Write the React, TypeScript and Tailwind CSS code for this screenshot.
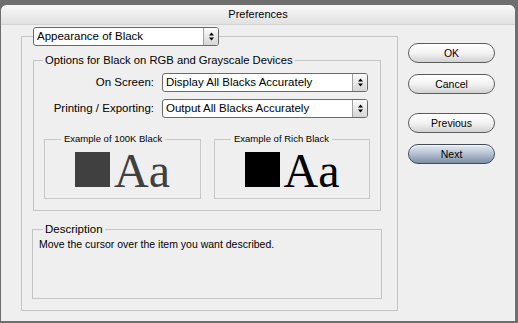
import React from "react";

function Select({ className, text, textSize }: { className: string; text: string; textSize: string }) {
  return (
    <div className={`flex h-[19px] bg-white border border-[#6a6a6a] rounded-[3px] overflow-hidden ${className}`}>
      <div className={`flex-1 flex items-center pl-[3px] whitespace-nowrap ${textSize} leading-none`}>{text}</div>
      <div className="w-[15px] border-l border-[#a0a0a0] bg-gradient-to-b from-[#fbfbfb] to-[#d6d6d6] flex items-center justify-center">
        <svg width="7" height="9" viewBox="0 0 7 9">
          <path d="M3.5 0.5L6 3.5H1Z M3.5 8.5L6 5.5H1Z" fill="#000" />
        </svg>
      </div>
    </div>
  );
}

function Btn({ label, primary, className }: { label: string; primary?: boolean; className?: string }) {
  return (
    <div
      className={`w-[87px] h-[20px] rounded-full border flex items-center justify-center text-[10.5px] leading-none ${
        primary
          ? "border-[#3f4a5a] bg-gradient-to-b from-[#e6ebf2] via-[#b4c0d0] to-[#7f8ea6] shadow-[inset_0_1px_0_#f4f7fb]"
          : "border-[#5c5c5c] bg-gradient-to-b from-[#ffffff] via-[#f3f3f3] to-[#d2d2d2] shadow-[inset_0_1px_0_#ffffff]"
      } ${className ?? ""}`}
    >
      {label}
    </div>
  );
}

function Example({ title, color, w }: { title: string; color: string; w: string }) {
  return (
    <fieldset className={`${w} h-[66px] border border-[#c8c8c8] m-0 p-0 min-w-0`}>
      <legend className="ml-[16px] px-[3px] text-[9.5px] leading-[12px]">{title}</legend>
      <div className="flex items-baseline justify-center pt-[2px]">
        <div className={`w-[35px] h-[35px] ${color === "gray" ? "bg-[#404040]" : "bg-black"}`} />
        <span
          className={`ml-[4px] font-['Liberation_Serif',serif] text-[48px] leading-none ${
            color === "gray" ? "text-[#404040]" : "text-black"
          }`}
        >
          Aa
        </span>
      </div>
    </fieldset>
  );
}

export default function App() {
  return (
    <div className="w-[518px] h-[323px] bg-[#6e6e6e] pt-[5px] pl-[1px] pr-[3px] pb-[2px] font-['Liberation_Sans',Arial,sans-serif] text-black">
      <div className="h-full flex flex-col rounded-t-[6px] bg-[#efefef] overflow-hidden">
        <div className="h-[20px] shrink-0 flex items-center justify-center bg-gradient-to-b from-[#f8f8f8] to-[#e1e1e1] border-b border-[#d2d2d2] text-[11px]">
          Preferences
        </div>
        <div className="flex flex-1 pl-[20px] pt-[2px]">
          <fieldset className="w-[377px] self-start border border-[#c4c4c4] pl-[11px] pr-[16px] pb-[11px] m-0 min-w-0">
            <legend className="p-0">
              <Select className="w-[186px]" text="Appearance of Black" textSize="text-[11.5px]" />
            </legend>
            <fieldset className="mt-[7px] w-[348px] border border-[#c4c4c4] pl-[9px] pb-[11px] m-0 min-w-0">
              <legend className="px-[2px] text-[11.25px] leading-[14px] whitespace-nowrap">
                Options for Black on RGB and Grayscale Devices
              </legend>
              <div className="mt-[6px] flex items-center">
                <span className="w-[111px] text-right text-[11.5px] leading-none">On Screen:</span>
                <Select className="ml-[8px] w-[206px]" text="Display All Blacks Accurately" textSize="text-[11.5px]" />
              </div>
              <div className="mt-[7px] flex items-center">
                <span className="w-[111px] text-right text-[11.5px] leading-none whitespace-nowrap">Printing / Exporting:</span>
                <Select className="ml-[8px] w-[206px]" text="Output All Blacks Accurately" textSize="text-[11.5px]" />
              </div>
              <div className="mt-[15px] pl-[1px] flex gap-[13px]">
                <Example title="Example of 100K Black" color="gray" w="w-[157px]" />
                <Example title="Example of Rich Black" color="black" w="w-[156px]" />
              </div>
            </fieldset>
            <fieldset className="mt-[11px] -ml-[1px] w-[350px] h-[77px] border border-[#c4c4c4] pl-[10px] m-0 min-w-0">
              <legend className="px-[2px] text-[11.5px] leading-[14px]">Description</legend>
              <div className="-ml-[4px] pt-[2px] text-[10.5px] leading-[13px]">
                Move the cursor over the item you want described.
              </div>
            </fieldset>
          </fieldset>
          <div className="ml-[10px] mt-[16px] flex flex-col">
            <Btn label="OK" />
            <Btn label="Cancel" className="mt-[11px]" />
            <Btn label="Previous" className="mt-[19px]" />
            <Btn label="Next" primary className="mt-[11px]" />
          </div>
        </div>
      </div>
    </div>
  );
}
